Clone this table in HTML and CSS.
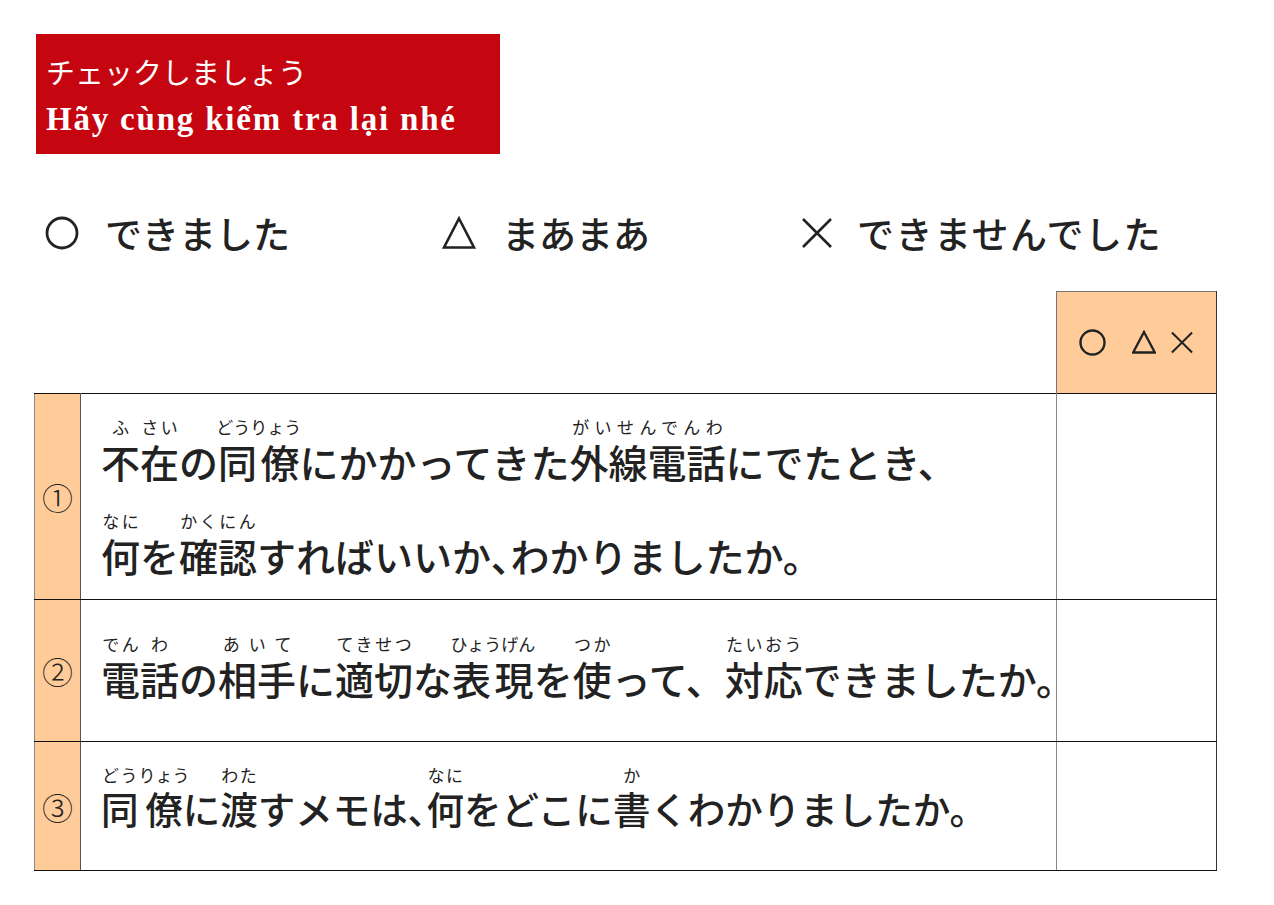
FILE: index.html
```html
<!DOCTYPE html>
<html lang="ja">
<head>
<meta charset="utf-8">
<title>チェックしましょう</title>
<link rel="stylesheet" href="styles.css">
</head>
<body>
<div class="page">
  <div class="banner">
    <div class="banner-jp">チェックしましょう</div>
    <div class="banner-vi">Hãy cùng kiểm tra lại nhé</div>
  </div>

  <div class="legend">
    <div class="legend-item item-ok">
      <svg class="sym sym-lg" viewBox="0 0 34 34" aria-label="○"><circle cx="17" cy="17" r="15" fill="none" stroke="#222" stroke-width="2.8"/></svg>
      <span>できました</span>
    </div>
    <div class="legend-item item-so">
      <svg class="sym sym-lg" viewBox="0 0 34 34" aria-label="△"><path d="M17 2.5 L32 31.5 L2 31.5 Z" fill="none" stroke="#222" stroke-width="2.6"/></svg>
      <span>まあまあ</span>
    </div>
    <div class="legend-item item-ng">
      <svg class="sym sym-lg sym-x" viewBox="0 0 34 34" aria-label="×"><path d="M3 3 L31 31 M31 3 L3 31" fill="none" stroke="#222" stroke-width="2.6"/></svg>
      <span>できませんでした</span>
    </div>
  </div>

  <table class="check">
    <colgroup>
      <col class="c-num">
      <col class="c-text">
      <col class="c-mark">
    </colgroup>
    <tr class="head">
      <td class="blank"></td>
      <td class="blank"></td>
      <td class="mark-head">
        <div class="marks">
          <svg class="mk mk-o" viewBox="0 0 27 27" aria-label="○"><circle cx="13.5" cy="13.5" r="12" fill="none" stroke="#222" stroke-width="2.4"/></svg>
          <svg class="mk mk-t" viewBox="0 0 24 24" aria-label="△"><path d="M12 2 L22.8 22.5 L1.2 22.5 Z" fill="none" stroke="#222" stroke-width="2.3"/></svg>
          <svg class="mk mk-x" viewBox="0 0 24 24" aria-label="×"><path d="M1.5 1.5 L22.5 22.5 M22.5 1.5 L1.5 22.5" fill="none" stroke="#222" stroke-width="2.1"/></svg>
        </div>
      </td>
    </tr>
    <tr class="row r1">
      <td class="num">①</td>
      <td class="q q1">
        <div class="line"><ruby>不<rt>ふ</rt></ruby><ruby>在<rt>さい</rt></ruby>の<ruby>同僚<rt>どうりょう</rt></ruby>にかかってきた<ruby>外線電話<rt>がいせんでんわ</rt></ruby>にでたとき、</div>
        <div class="line"><ruby>何<rt>なに</rt></ruby>を<ruby>確認<rt>かくにん</rt></ruby>すればいいか<span class="half">、</span>わかりましたか。</div>
      </td>
      <td class="mark"></td>
    </tr>
    <tr class="row r2">
      <td class="num">②</td>
      <td class="q q2">
        <div class="line"><ruby>電<rt>でん</rt></ruby><ruby>話<rt>わ</rt></ruby>の<ruby>相手<rt>あいて</rt></ruby>に<ruby>適切<rt>てきせつ</rt></ruby>な<ruby>表現<rt>ひょうげん</rt></ruby>を<ruby>使<rt>つか</rt></ruby>って、<ruby>対応<rt>たいおう</rt></ruby>できましたか。</div>
      </td>
      <td class="mark"></td>
    </tr>
    <tr class="row r3">
      <td class="num">③</td>
      <td class="q q3">
        <div class="line"><ruby>同<rt>どう</rt></ruby><ruby>僚<rt>りょう</rt></ruby>に<ruby>渡<rt>わた</rt></ruby>すメモは<span class="half">、</span><ruby>何<rt>なに</rt></ruby>をどこに<ruby>書<rt>か</rt></ruby>くわかりましたか。</div>
      </td>
      <td class="mark"></td>
    </tr>
  </table>
</div>
</body>
</html>
```

FILE: styles.css
```css
html, body {
  margin: 0;
  padding: 0;
  background: #ffffff;
}

body {
  font-family: "Noto Sans CJK JP", "Noto Sans", sans-serif;
  color: #222222;
}

.page {
  padding: 34px 0 0 34px;
}

/* ---------- banner ---------- */
.banner {
  box-sizing: border-box;
  width: 464px;
  height: 120px;
  margin-left: 2px;
  padding: 19px 0 0 10px;
  background: #c5050f;
  color: #ffffff;
}

.banner-jp {
  font-family: "Noto Sans CJK JP", sans-serif;
  font-size: 29px;
  font-weight: 400;
  line-height: 36px;
}

.banner-vi {
  margin-top: 10px;
  font-family: "Liberation Serif", "Times New Roman", serif;
  font-size: 33px;
  font-weight: 700;
  line-height: 40px;
  letter-spacing: 1.8px;
}

/* ---------- legend ---------- */
.legend {
  display: flex;
  align-items: center;
  height: 50px;
  margin-top: 54px;
  padding-left: 11px;
}

.legend-item {
  display: flex;
  align-items: center;
  font-size: 37px;
  font-weight: 500;
  line-height: 50px;
}

.item-ok { width: 397px; }
.item-so { width: 358px; }
.item-ng span { letter-spacing: 1.5px; }

.sym {
  display: block;
  flex: none;
}

.sym-lg {
  width: 34px;
  height: 34px;
  margin-right: 26px;
}

.sym-x {
  margin-right: 23px;
}

/* ---------- table ---------- */
.check {
  margin-top: 33px;
  border-collapse: collapse;
  table-layout: fixed;
  width: 1182px;
}

.c-num { width: 46px; }
.c-text { width: 976px; }
.c-mark { width: 160px; }

.check td {
  padding: 0;
}

.head {
  height: 102px;
}

.blank {
  border: none;
}

.mark-head {
  background: #ffcc99;
  border-top: 1px solid #777777;
  border-left: 1px solid #777777;
  border-right: 1px solid #333333;
  vertical-align: middle;
}

.marks {
  display: flex;
  align-items: center;
  padding-left: 22px;
}

.mk {
  display: block;
  flex: none;
}

.mk-o { width: 27px; height: 27px; margin-right: 26px; }
.mk-t { width: 24px; height: 24px; margin-right: 14px; margin-top: -1px; }
.mk-x { width: 24px; height: 23px; }

.row td {
  border-top: 1px solid #111111;
  border-bottom: 1px solid #111111;
}

.r1 { height: 206px; }
.r2 { height: 142px; }
.r3 { height: 129px; }

.num {
  background: #ffcc99;
  border-left: 1px solid #888888;
  border-right: 1px solid #555555;
  text-align: center;
  vertical-align: middle;
  font-size: 31px;
  font-weight: 300;
  color: #222222;
}

.q {
  padding-left: 20px !important;
  font-size: 39px;
  font-weight: 500;
  white-space: nowrap;
  vertical-align: middle;
}

.q3 {
  font-size: 37.5px;
}

.line {
  line-height: 90px;
}

.half {
  font-feature-settings: "palt" 1;
}

.q1 {
  vertical-align: top;
  padding-top: 20px !important;
}

.q1 .line + .line {
  margin-top: 2px;
}

.q1 .line:last-child {
  margin-bottom: -20px;
}

.q2 { padding-top: 12px !important; }
.q3 { padding-top: 2px !important; }

rt {
  font-size: 17px;
  font-weight: 400;
  line-height: 20px;
  padding-bottom: 4px;
}

.mark {
  border-left: 1px solid #888888;
  border-right: 1px solid #333333;
}
```
